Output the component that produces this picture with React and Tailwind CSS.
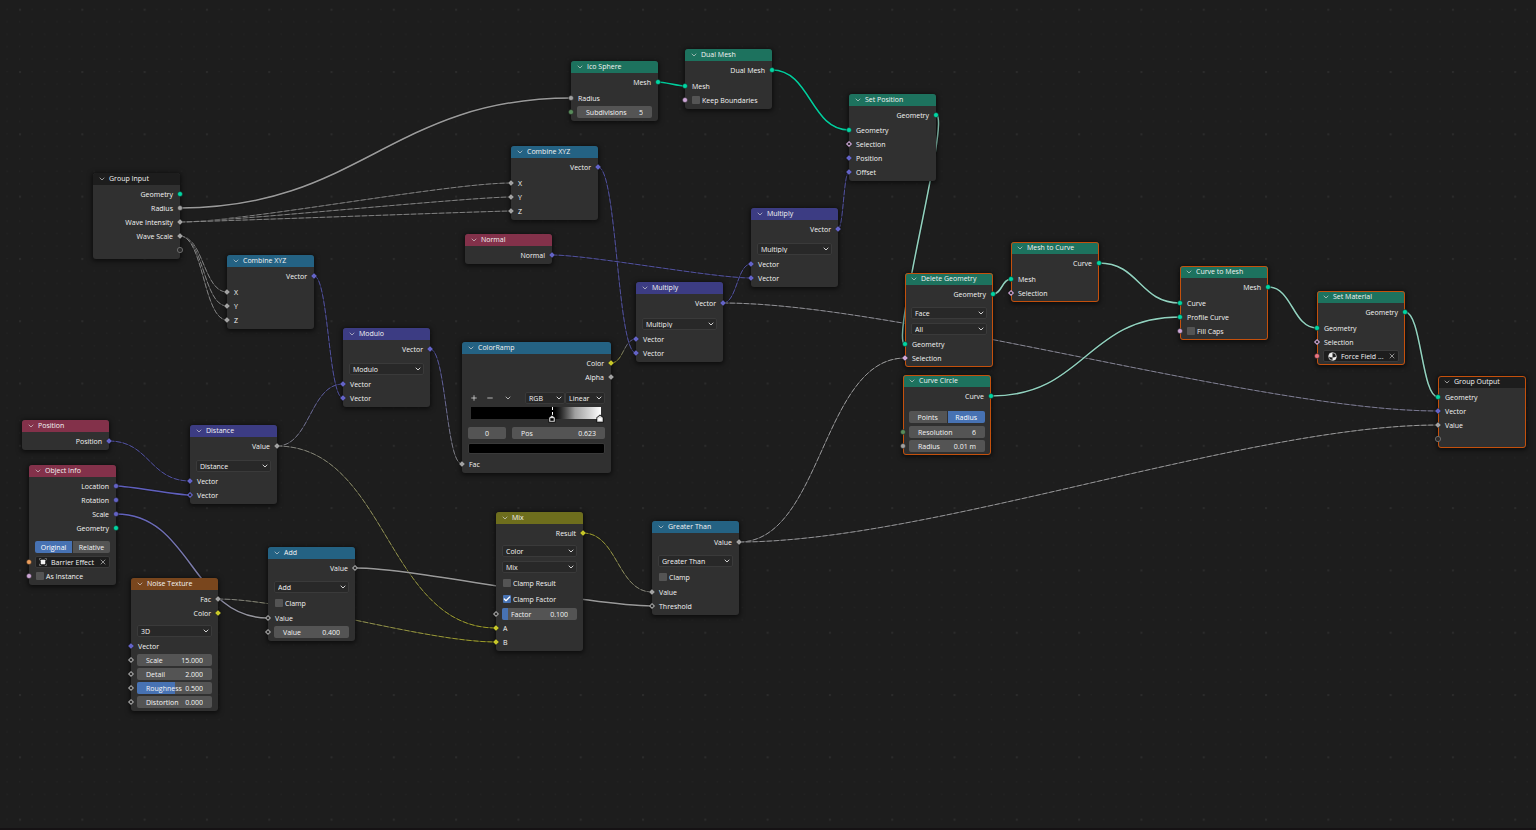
import { Check, ChevronDown, Minus, Plus, X } from 'lucide-react'

const COLORS = {
  geometry: '#00d6a3',
  value: '#a1a1a1',
  vector: '#6363c7',
  color: '#c7c729',
  bool: '#cca6d6',
  int: '#598c5c',
  object: '#ed9e5c',
  material: '#eb7582',
  virtual: '#6b6b6b',
}

const HEADERS = {
  geometry: 'bg-[#1d725e]',
  converter: 'bg-[#246283]',
  vector: 'bg-[#3c3c83]',
  input: 'bg-[#83314a]',
  texture: 'bg-[#79461d]',
  color: 'bg-[#6e6e1d]',
  group: 'bg-[#1d1d1d]',
}

const HEADER_H = 14
const ROW_H = {
  out: 14,
  in: 14,
  number: 14,
  socketCheck: 14,
  field: 14,
  select: 16,
  check: 16,
  toggle: 16,
  rampTools: 16,
  ramp: 18,
  rampPos: 18,
  swatch: 12,
}

const out = (label, color, shape = 'diamond') => ({ kind: 'out', label, color, shape })
const inp = (label, color, shape = 'diamond', gap = 0) => ({ kind: 'in', label, color, shape, gap })
const select = (label, gap = 0) => ({ kind: 'select', label, gap })
const number = (label, value, color, shape, rest = {}) => ({ kind: 'number', label, value, color, shape, ...rest })

const NODES = [
  {
    id: 'groupInput', title: 'Group Input', type: 'group', x: 93, y: 173,
    rows: [
      out('Geometry', 'geometry', 'circle'),
      out('Radius', 'value', 'circle'),
      out('Wave Intensity', 'value'),
      out('Wave Scale', 'value'),
      out('', 'virtual', 'open'),
    ],
  },
  {
    id: 'combineA', title: 'Combine XYZ', type: 'converter', x: 227, y: 255,
    rows: [out('Vector', 'vector'), inp('X', 'value', 'diamond', 2), inp('Y', 'value'), inp('Z', 'value')],
  },
  {
    id: 'combineB', title: 'Combine XYZ', type: 'converter', x: 511, y: 146,
    rows: [out('Vector', 'vector'), inp('X', 'value', 'diamond', 2), inp('Y', 'value'), inp('Z', 'value')],
  },
  { id: 'normal', title: 'Normal', type: 'input', x: 465, y: 234, rows: [out('Normal', 'vector')] },
  {
    id: 'modulo', title: 'Modulo', type: 'vector', x: 343, y: 328,
    rows: [out('Vector', 'vector'), select('Modulo', 5), inp('Vector', 'vector'), inp('Vector', 'vector')],
  },
  { id: 'position', title: 'Position', type: 'input', x: 22, y: 420, rows: [out('Position', 'vector')] },
  {
    id: 'distance', title: 'Distance', type: 'vector', x: 190, y: 425,
    rows: [out('Value', 'value'), select('Distance', 5), inp('Vector', 'vector'), inp('Vector', 'vector', 'ring')],
  },
  {
    id: 'objectInfo', title: 'Object Info', type: 'input', x: 29, y: 465,
    rows: [
      out('Location', 'vector', 'circle'),
      out('Rotation', 'vector', 'circle'),
      out('Scale', 'vector', 'circle'),
      out('Geometry', 'geometry', 'circle'),
      { kind: 'toggle', options: ['Original', 'Relative'], active: 'Original', gap: 4 },
      { kind: 'field', label: 'Object', value: 'Barrier Effect', icon: 'object', color: 'object', shape: 'circle' },
      { kind: 'socketCheck', label: 'As Instance', color: 'bool', shape: 'circle' },
    ],
  },
  {
    id: 'noise', title: 'Noise Texture', type: 'texture', x: 131, y: 578,
    rows: [
      out('Fac', 'value'),
      out('Color', 'color'),
      select('3D', 3),
      inp('Vector', 'vector'),
      number('Scale', '15.000', 'value', 'ring'),
      number('Detail', '2.000', 'value', 'ring'),
      number('Roughness', '0.500', 'value', 'ring', { fill: 50 }),
      number('Distortion', '0.000', 'value', 'ring'),
    ],
  },
  {
    id: 'add', title: 'Add', type: 'converter', x: 268, y: 547,
    rows: [
      out('Value', 'value', 'ring'),
      select('Add', 4),
      { kind: 'check', label: 'Clamp' },
      inp('Value', 'value', 'ring'),
      number('Value', '0.400', 'value', 'ring'),
    ],
  },
  {
    id: 'ramp', title: 'ColorRamp', type: 'converter', x: 462, y: 342, w: 149,
    rows: [
      out('Color', 'color'),
      out('Alpha', 'value'),
      { kind: 'rampTools', gap: 6 },
      { kind: 'ramp' },
      { kind: 'rampPos' },
      { kind: 'swatch' },
      inp('Fac', 'value', 'diamond', 3),
    ],
  },
  {
    id: 'mix', title: 'Mix', type: 'color', x: 496, y: 512,
    rows: [
      out('Result', 'color'),
      select('Color', 3),
      select('Mix'),
      { kind: 'check', label: 'Clamp Result' },
      { kind: 'check', label: 'Clamp Factor', checked: true },
      number('Factor', '0.100', 'value', 'ring', { fill: 8 }),
      inp('A', 'color'),
      inp('B', 'color'),
    ],
  },
  {
    id: 'greater', title: 'Greater Than', type: 'converter', x: 652, y: 521,
    rows: [
      out('Value', 'value'),
      select('Greater Than', 4),
      { kind: 'check', label: 'Clamp' },
      inp('Value', 'value'),
      inp('Threshold', 'value', 'ring'),
    ],
  },
  {
    id: 'multiplyA', title: 'Multiply', type: 'vector', x: 636, y: 282,
    rows: [out('Vector', 'vector'), select('Multiply', 6), inp('Vector', 'vector'), inp('Vector', 'vector')],
  },
  {
    id: 'multiplyB', title: 'Multiply', type: 'vector', x: 751, y: 208,
    rows: [out('Vector', 'vector'), select('Multiply', 5), inp('Vector', 'vector'), inp('Vector', 'vector')],
  },
  {
    id: 'ico', title: 'Ico Sphere', type: 'geometry', x: 571, y: 61,
    rows: [
      out('Mesh', 'geometry', 'circle'),
      inp('Radius', 'value', 'circle', 2),
      number('Subdivisions', '5', 'int', 'circle'),
    ],
  },
  {
    id: 'dual', title: 'Dual Mesh', type: 'geometry', x: 685, y: 49,
    rows: [
      out('Dual Mesh', 'geometry', 'circle'),
      inp('Mesh', 'geometry', 'circle', 2),
      { kind: 'socketCheck', label: 'Keep Boundaries', color: 'bool', shape: 'circle' },
    ],
  },
  {
    id: 'setPosition', title: 'Set Position', type: 'geometry', x: 849, y: 94,
    rows: [
      out('Geometry', 'geometry', 'circle'),
      inp('Geometry', 'geometry', 'circle', 1),
      inp('Selection', 'bool', 'ring'),
      inp('Position', 'vector'),
      inp('Offset', 'vector'),
    ],
  },
  {
    id: 'delete', title: 'Delete Geometry', type: 'geometry', x: 905, y: 273, selected: true,
    rows: [
      out('Geometry', 'geometry', 'circle'),
      select('Face', 4),
      select('All'),
      inp('Geometry', 'geometry', 'circle'),
      inp('Selection', 'bool'),
    ],
  },
  {
    id: 'circle', title: 'Curve Circle', type: 'geometry', x: 903, y: 375, selected: true,
    rows: [
      out('Curve', 'geometry', 'circle'),
      { kind: 'toggle', options: ['Points', 'Radius'], active: 'Radius', gap: 6 },
      number('Resolution', '6', 'int', 'circle'),
      number('Radius', '0.01 m', 'value', 'circle'),
    ],
  },
  {
    id: 'meshToCurve', title: 'Mesh to Curve', type: 'geometry', x: 1011, y: 242, selected: true,
    rows: [
      out('Curve', 'geometry', 'circle'),
      inp('Mesh', 'geometry', 'circle', 2),
      inp('Selection', 'bool', 'ring'),
    ],
  },
  {
    id: 'curveToMesh', title: 'Curve to Mesh', type: 'geometry', x: 1180, y: 266, selected: true,
    rows: [
      out('Mesh', 'geometry', 'circle'),
      inp('Curve', 'geometry', 'circle', 2),
      inp('Profile Curve', 'geometry', 'circle'),
      { kind: 'socketCheck', label: 'Fill Caps', color: 'bool', shape: 'circle' },
    ],
  },
  {
    id: 'material', title: 'Set Material', type: 'geometry', x: 1317, y: 291, selected: true,
    rows: [
      out('Geometry', 'geometry', 'circle'),
      inp('Geometry', 'geometry', 'circle', 2),
      inp('Selection', 'bool', 'ring'),
      { kind: 'field', label: 'Material', value: 'Force Field ...', icon: 'material', color: 'material', shape: 'circle' },
    ],
  },
  {
    id: 'groupOutput', title: 'Group Output', type: 'group', x: 1438, y: 376, selected: true,
    rows: [
      inp('Geometry', 'geometry', 'circle'),
      inp('Vector', 'vector'),
      inp('Value', 'value'),
      inp('', 'virtual', 'open'),
    ],
  },
]

// [from node, row, to node, row, style]
const LINKS = [
  ['groupInput', 1, 'ico', 1, 'solid'],
  ['groupInput', 2, 'combineB', 1],
  ['groupInput', 2, 'combineB', 2],
  ['groupInput', 2, 'combineB', 3],
  ['groupInput', 3, 'combineA', 1],
  ['groupInput', 3, 'combineA', 2],
  ['groupInput', 3, 'combineA', 3],
  ['combineA', 0, 'modulo', 3],
  ['position', 0, 'distance', 2],
  ['objectInfo', 0, 'distance', 3, 'solid'],
  ['objectInfo', 2, 'add', 3, 'solid'],
  ['distance', 0, 'modulo', 2],
  ['distance', 0, 'mix', 6],
  ['noise', 0, 'mix', 7],
  ['add', 0, 'greater', 4, 'solid'],
  ['modulo', 0, 'ramp', 6],
  ['ramp', 0, 'multiplyA', 2],
  ['combineB', 0, 'multiplyA', 3],
  ['normal', 0, 'multiplyB', 3],
  ['multiplyA', 0, 'multiplyB', 2],
  ['multiplyB', 0, 'setPosition', 4],
  ['mix', 0, 'greater', 3],
  ['ico', 0, 'dual', 1, 'solid'],
  ['dual', 0, 'setPosition', 1, 'solid'],
  ['greater', 0, 'delete', 4, 'light'],
  ['multiplyA', 0, 'groupOutput', 1, 'light'],
  ['greater', 0, 'groupOutput', 2, 'light'],
  ['setPosition', 0, 'delete', 3, 'active'],
  ['delete', 0, 'meshToCurve', 1, 'active'],
  ['meshToCurve', 0, 'curveToMesh', 1, 'active'],
  ['circle', 0, 'curveToMesh', 2, 'active'],
  ['curveToMesh', 0, 'material', 1, 'active'],
  ['material', 0, 'groupOutput', 0, 'active'],
]

const widthOf = (node) => node.w ?? (node.selected ? 88 : 87)

function anchor(id, index) {
  const node = NODES.find((n) => n.id === id)
  let y = node.y + HEADER_H
  for (let i = 0; i < index; i++) y += (node.rows[i].gap ?? 0) + ROW_H[node.rows[i].kind]
  const row = node.rows[index]
  y += (row.gap ?? 0) + ROW_H[row.kind] / 2
  const x = row.kind === 'out' ? node.x + widthOf(node) : node.x
  return { x, y, color: COLORS[row.color] }
}

function Link({ link, index }) {
  const [from, fromRow, to, toRow, style] = link
  const a = anchor(from, fromRow)
  const b = anchor(to, toRow)
  const dx = Math.abs(b.x - a.x)
  const slope = Math.abs(b.y - a.y) / dx
  const handle = 0.5 * dx * Math.min(1, slope * 3.25)
  const d = `M${a.x} ${a.y}C${a.x + handle} ${a.y} ${b.x - handle} ${b.y} ${b.x} ${b.y}`
  const id = `link-${index}`
  const thick = style === 'solid' || style === 'active'

  let start = a.color
  let end = b.color
  if (style === 'active') start = end = '#98dcc8'
  if (style === 'light') {
    start = '#b8b8bc'
    end = to === 'groupOutput' && toRow === 1 ? '#9896b8' : '#c4c4c4'
  }

  return (
    <g fill="none">
      <linearGradient id={id} gradientUnits="userSpaceOnUse" x1={a.x} y1={a.y} x2={b.x} y2={b.y}>
        <stop offset="0" stopColor={start} />
        <stop offset="1" stopColor={end} />
      </linearGradient>
      <path d={d} stroke="#141414" strokeWidth={thick ? 3 : 2} strokeOpacity="0.6" />
      {thick ? (
        <path d={d} stroke={`url(#${id})`} strokeWidth="1.5" strokeOpacity="0.95" />
      ) : (
        <>
          <path d={d} stroke={`url(#${id})`} strokeWidth="1" strokeOpacity="0.4" />
          <path d={d} stroke={`url(#${id})`} strokeWidth="1" strokeOpacity="0.6" strokeDasharray="5 2" />
        </>
      )}
    </g>
  )
}

function Socket({ row }) {
  const c = COLORS[row.color]
  return (
    <svg
      viewBox="0 0 8 8"
      className={`absolute top-1/2 size-2 -translate-y-1/2 ${row.kind === 'out' ? '-right-1' : '-left-1'}`}
    >
      {row.shape === 'circle' && <circle cx="4" cy="4" r="2.5" fill={c} stroke="#1a1a1a" strokeWidth="0.5" />}
      {row.shape === 'open' && <circle cx="4" cy="4" r="2.6" fill="#2a2a2a" stroke={c} strokeWidth="1" />}
      {row.shape === 'diamond' && <path d="M4 .9 7.1 4 4 7.1.9 4Z" fill={c} stroke="#1a1a1a" strokeWidth="0.4" />}
      {row.shape === 'ring' && <path d="M4 1.7 6.3 4 4 6.3 1.7 4Z" fill="#1d1d1d" stroke={c} strokeWidth="1.1" />}
    </svg>
  )
}

function SelectBox({ label, className = '' }) {
  return (
    <span className={`relative flex h-3 min-w-0 ${className}`}>
      <select
        aria-label={label}
        className="h-full w-full appearance-none rounded-[2px] border border-[#3a3a3a] bg-[#282828] pl-[3px] leading-none"
      >
        <option>{label}</option>
      </select>
      <ChevronDown className="pointer-events-none absolute right-0.5 top-1/2 size-2 -translate-y-1/2" strokeWidth={2.5} />
    </span>
  )
}

function NumberBox({ label, value, fill = 0, className = '' }) {
  return (
    <label className={`relative flex h-3 items-center overflow-hidden rounded-[2px] bg-[#545454] px-[9px] ${className}`}>
      {fill > 0 && <span className="absolute inset-y-0 left-0 bg-[#4772b3]" style={{ width: `${fill}%` }} />}
      <span className="relative whitespace-nowrap">{label}</span>
      <input defaultValue={value} className="relative h-full w-0 min-w-0 flex-1 bg-transparent text-right" />
    </label>
  )
}

function CheckBox({ label, checked }) {
  return (
    <label className="flex items-center gap-0.5 whitespace-nowrap pl-px">
      <span className="relative flex size-2">
        <input
          type="checkbox"
          defaultChecked={checked}
          className="size-2 appearance-none rounded-[1px] bg-[#545454] checked:bg-[#4772b3]"
        />
        {checked && <Check className="pointer-events-none absolute inset-0 size-2 text-white" strokeWidth={4} />}
      </span>
      {label}
    </label>
  )
}

function ObjectIcon() {
  return (
    <svg viewBox="0 0 9 9" className="size-2 shrink-0">
      <path d="M.5 2.5v-2h2M6.5.5h2v2M8.5 6.5v2h-2M2.5 8.5h-2v-2" fill="none" stroke="#8a8a8a" strokeWidth="0.8" />
      <rect x="2" y="2" width="5" height="5" rx="0.5" fill="#f0f0f0" />
    </svg>
  )
}

function MaterialIcon() {
  return (
    <svg viewBox="0 0 10 10" className="ml-px size-[9px] shrink-0">
      <circle cx="5" cy="5" r="4.3" fill="#1d1d1d" stroke="#e6e6e6" strokeWidth="0.8" />
      <path d="M5 .7A4.3 4.3 0 0 0 .7 5Q2.5 6.2 5 6.2ZM5 6.2Q7.5 6.2 9.3 5A4.3 4.3 0 0 1 5 9.3Z" fill="#f0f0f0" />
    </svg>
  )
}

function RampStop({ fill, className }) {
  return (
    <svg viewBox="0 0 8 9" className={`absolute bottom-0 h-[9px] w-2 ${className}`}>
      <path d="M4 .4 7.6 3.4v5.200H.4V3.4Z" fill="#0c0c0c" />
      <path d="M4 1.400 6.800 3.700v4.100H1.200V3.700Z" fill="#dcdcdc" />
      <rect x="2.300" y="4.200" width="3.400" height="2.600" fill={fill} />
    </svg>
  )
}

function RowBody({ row }) {
  switch (row.kind) {
    case 'out':
      return <span className="ml-auto pr-px">{row.label}</span>
    case 'in':
      return <span className="pl-px">{row.label}</span>
    case 'select':
      return <SelectBox label={row.label} className="flex-1" />
    case 'number':
      return <NumberBox label={row.label} value={row.value} fill={row.fill} className="flex-1" />
    case 'check':
    case 'socketCheck':
      return <CheckBox label={row.label} checked={row.checked} />
    case 'toggle':
      return (
        <div className="flex h-3 flex-1 gap-px overflow-hidden rounded-[2px]">
          {row.options.map((option) => (
            <button
              key={option}
              type="button"
              aria-pressed={option === row.active}
              className={`flex-1 ${option === row.active ? 'bg-[#4772b3] text-white' : 'bg-[#545454]'}`}
            >
              {option}
            </button>
          ))}
        </div>
      )
    case 'field':
      return (
        <div className="flex h-3 flex-1 items-center gap-1 rounded-[2px] border border-[#3a3a3a] bg-[#1d1d1d] pl-[3px] pr-0.5">
          {row.icon === 'object' ? <ObjectIcon /> : <MaterialIcon />}
          <input aria-label={row.label} defaultValue={row.value} className="h-full w-0 min-w-0 flex-1 bg-transparent" />
          <button type="button" aria-label={`Clear ${row.label}`}>
            <X className="size-2 text-[#c8c8c8]" />
          </button>
        </div>
      )
    case 'rampTools':
      return (
        <>
          <div className="flex flex-1 gap-2 pl-0.5">
            <button type="button" aria-label="Add stop"><Plus className="size-2" /></button>
            <button type="button" aria-label="Remove stop"><Minus className="size-2" /></button>
            <button type="button" aria-label="Ramp tools" className="pl-0.5"><ChevronDown className="size-2" /></button>
          </div>
          <SelectBox label="RGB" className="w-10" />
          <SelectBox label="Linear" className="w-10" />
        </>
      )
    case 'ramp':
      return (
        <div className="relative ml-[3px] mr-1 h-4 flex-1">
          <div className="h-3 bg-linear-to-r from-black from-[62%] via-[#a0a0a0] via-[80%] to-white" />
          <span className="absolute left-[62%] top-0 h-2 border-l border-dashed border-white" />
          <RampStop fill="#000" className="left-[59%]" />
          <RampStop fill="#fff" className="-right-[3px]" />
        </div>
      )
    case 'rampPos':
      return (
        <>
          <input
            aria-label="Active stop"
            defaultValue="0"
            className="h-3 w-[38px] rounded-[2px] bg-[#545454] text-center"
          />
          <NumberBox label="Pos" value="0.623" className="ml-1.5 flex-1" />
        </>
      )
    case 'swatch':
      return <button type="button" aria-label="Stop color" className="h-[11px] flex-1 rounded-[2px] border border-[#3a3a3a] bg-black" />
    default:
      return null
  }
}

function Node({ node }) {
  return (
    <section
      className={`absolute rounded-[3px] bg-[#303030] pb-0.5 shadow-[0_1px_5px_1px_rgba(0,0,0,0.6)] ${
        node.selected ? 'outline outline-[#c4500c] -outline-offset-1' : ''
      }`}
      style={{ left: node.x, top: node.y, width: widthOf(node) }}
    >
      <header className={`mb-0.5 flex h-3 items-center gap-[3px] rounded-t-[3px] pb-px pl-[5px] ${HEADERS[node.type]}`}>
        <ChevronDown className="size-2 text-[#d8d8d8]" />
        <h2>{node.title}</h2>
      </header>
      {node.rows.map((row, i) => (
        <div
          key={i}
          className="relative flex items-center px-1.5"
          style={{ height: ROW_H[row.kind], marginTop: row.gap ?? 0 }}
        >
          {row.shape && <Socket row={row} />}
          <RowBody row={row} />
        </div>
      ))}
    </section>
  )
}

function Grid() {
  const ticks = [0, 1, 2, 3, 4]
  return (
    <>
      <pattern id="grid" x="19" y="8.7" width="62.3" height="62.3" patternUnits="userSpaceOnUse">
        {ticks.map((r) =>
          ticks.map((c) => (
            <rect
              key={`${r}-${c}`}
              x={c * 12.46}
              y={r * 12.46}
              width={r + c === 0 ? 2 : 1.2}
              height={r + c === 0 ? 2 : 1.2}
              fill={r + c === 0 ? '#2b2b2b' : '#242424'}
            />
          )),
        )}
      </pattern>
      <rect width="100%" height="100%" fill="url(#grid)" />
    </>
  )
}

export default function App() {
  return (
    <main className="relative min-h-screen w-full overflow-hidden border-b-2 border-[#151214] bg-[#1d1d1d] font-['Open_Sans','Noto_Sans',sans-serif] text-[7px] leading-none text-[#f4f4f4]">
      <svg className="absolute inset-0 size-full">
        <Grid />
        {LINKS.map((link, i) => (
          <Link key={i} link={link} index={i} />
        ))}
      </svg>
      {NODES.map((node) => (
        <Node key={node.id} node={node} />
      ))}
    </main>
  )
}
